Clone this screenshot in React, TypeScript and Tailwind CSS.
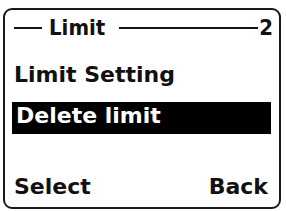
export default function App() {
  const body = { fontFamily: '"DejaVu Sans", sans-serif' };
  const head = { fontFamily: '"Liberation Sans Narrow", "DejaVu Sans Condensed", "Arial Narrow", sans-serif' };

  return (
    <div className="w-[286px] h-[211px] bg-white pt-[8px] pl-[3px] overflow-hidden">
      <div className="w-[278px] h-[201px] border-2 border-[#1a1a1a] rounded-[9px] flex flex-col text-[#111]">
        {/* title row */}
        <div className="mt-[8px] h-[20px] flex items-center pl-[9px] pr-[6px]" style={head}>
          <div className="w-[28px] h-[2px] bg-[#111]" />
          <span className="ml-[7px] text-[22px] leading-[20px] font-bold">Limit</span>
          <div className="ml-[14px] flex-1 h-[2px] bg-[#111]" />
          <span className="ml-[1px] text-[22px] leading-[20px] font-bold">2</span>
        </div>

        <div style={body} className="flex flex-col flex-1 font-bold text-[22px]">
          <div className="mt-[21px] mx-[7px] h-[32px] leading-[32px] pl-[2px] whitespace-nowrap">
            Limit Setting
          </div>
          <div className="mt-[11px] ml-[7px] mr-[8px] h-[32px] leading-[28px] pl-[4px] bg-black text-white whitespace-nowrap">
            Delete limit
          </div>

          <div className="flex-1" />

          <div className="mb-[4px] h-[32px] leading-[32px] flex justify-between pl-[9px] pr-[11px]">
            <span>Select</span>
            <span>Back</span>
          </div>
        </div>
      </div>
    </div>
  );
}
